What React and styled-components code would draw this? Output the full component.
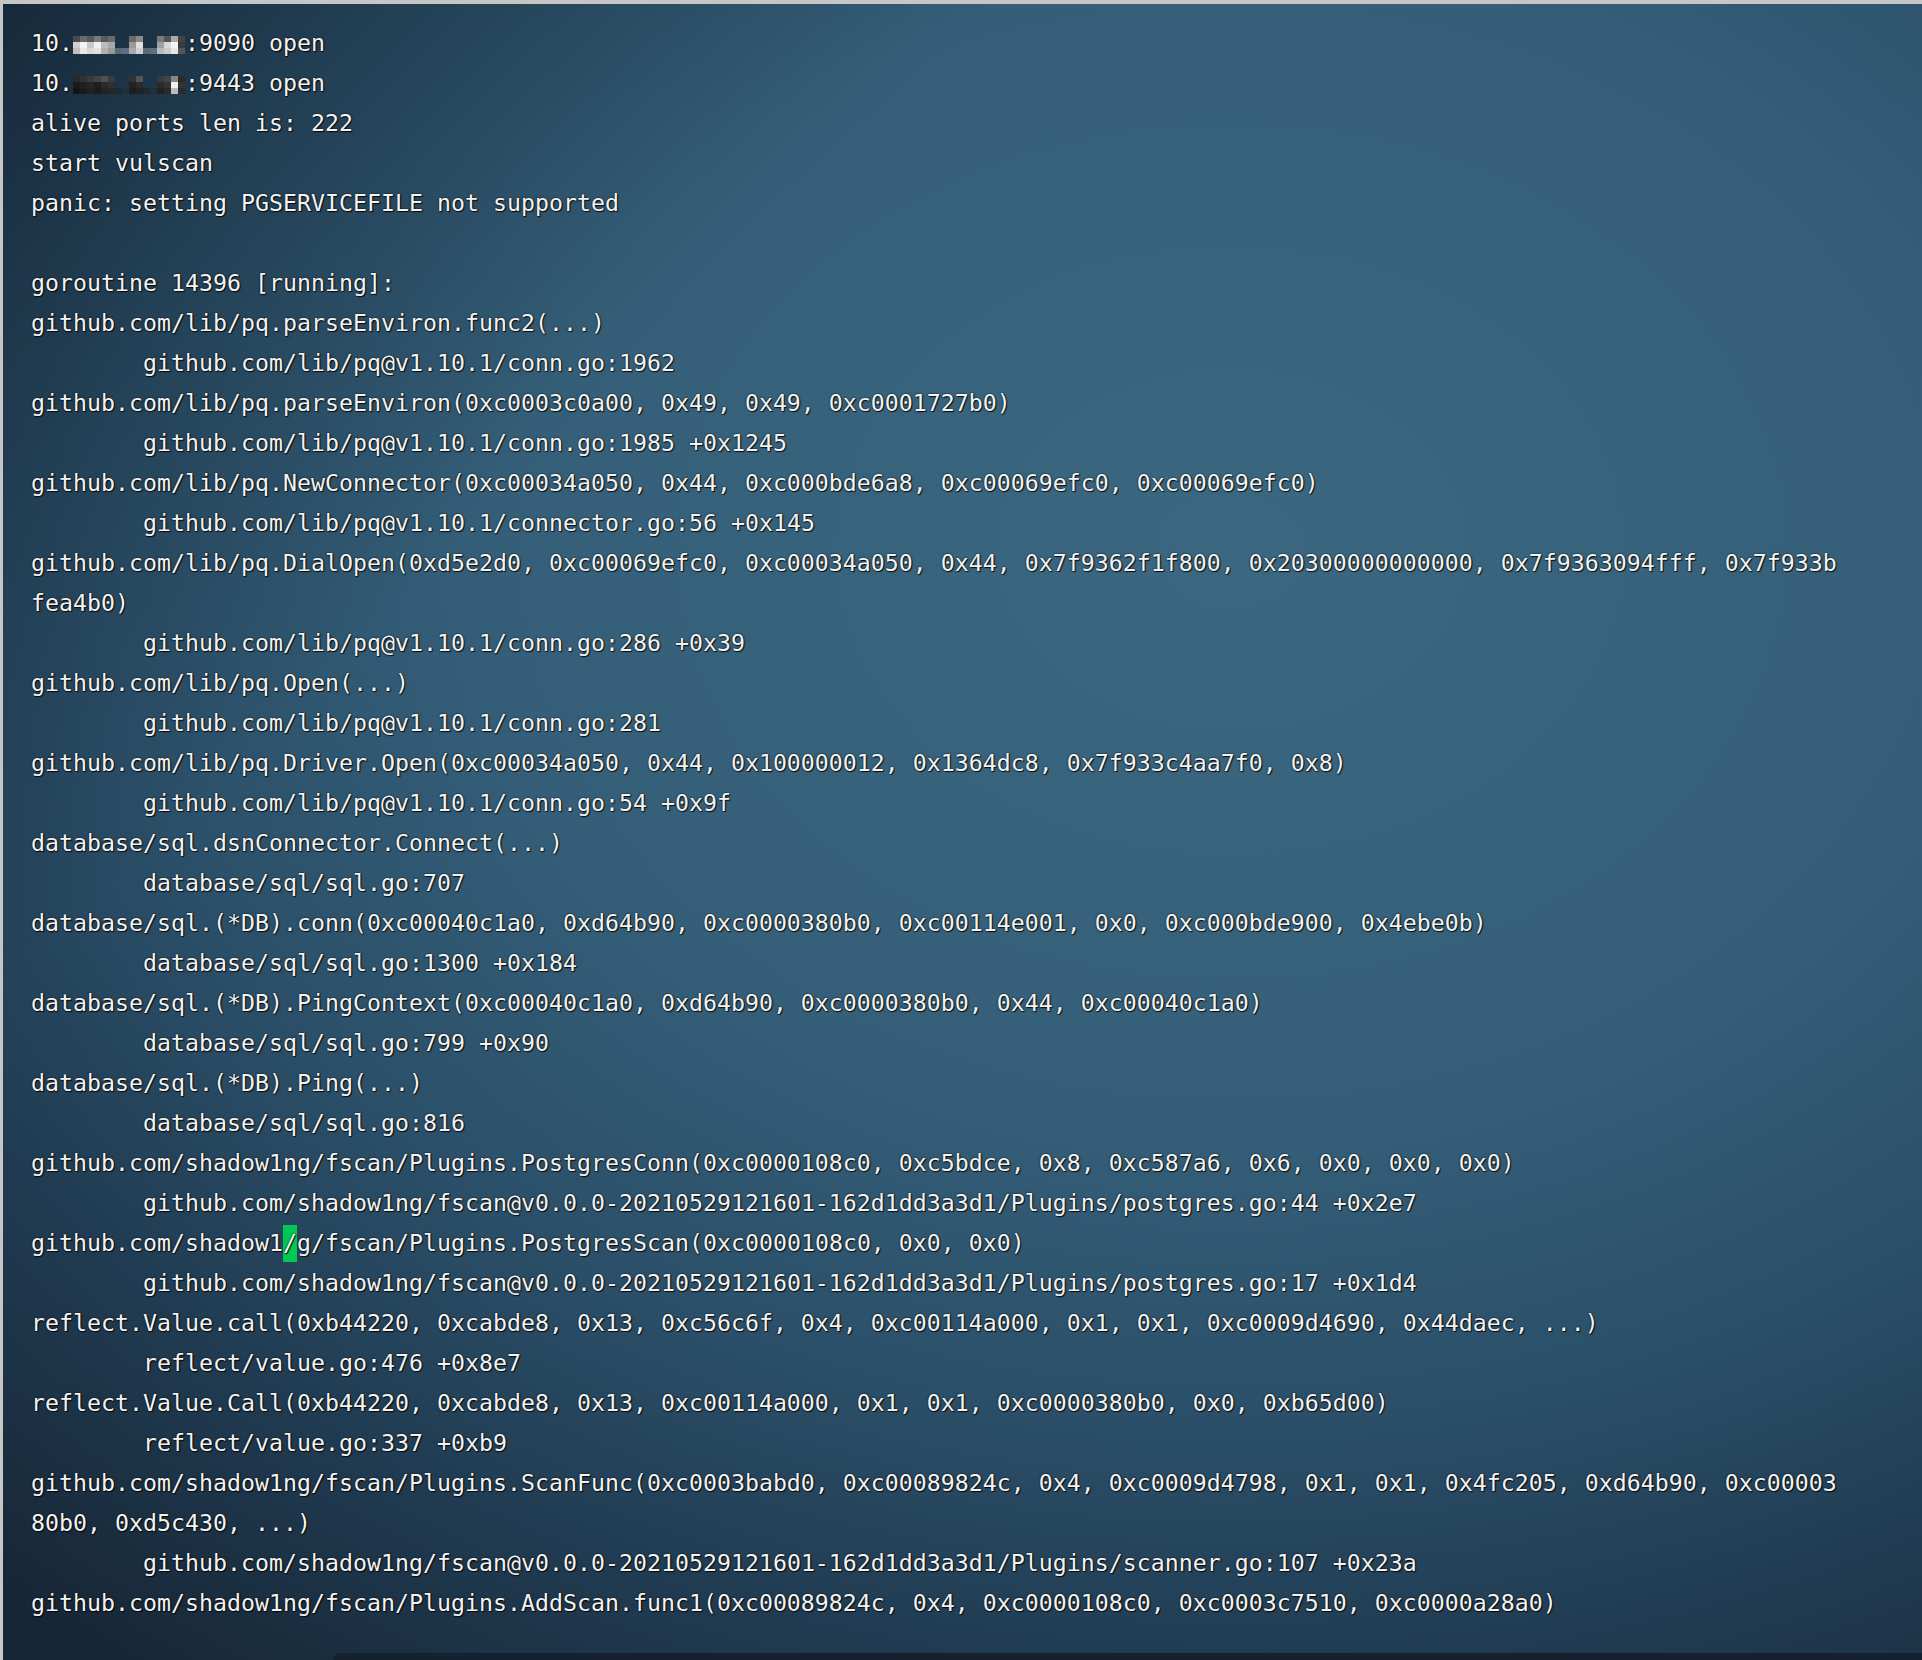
import styled, { createGlobalStyle } from "styled-components";

const GlobalStyle = createGlobalStyle`
    html, body {
        margin: 0;
        padding: 0;
        background: #c6c6c6;
    }
`;

const T = "\t";

// pixelated (blurred) ip bytes, 16 x 3 cells of 7px
const MOSAIC = {
    light: [
        ["#4a4a4a","#6a6a6a","#5a5a5a","#7a7a7a","#5a5a5a","#6a6a6a",null,null,"#6a6a6a","#8a8a8a",null,null,"#7a7a7a","#555","#aaa","#444"],
        ["#d0d0d0","#f4f4f4","#c8c8c8","#f0f0f0","#bdbdbd","#a8a8a8",null,null,"#9a9a9a","#e0e0e0",null,null,"#a0a0a0","#d8d8d8","#f4f4f4","#3a3a3a"],
        ["#c0c0c0","#e8e8e8","#d8d8d8","#e0e0e0","#b0b0b0","#999","#5a6a78","#607080","#aaa","#d0d0d0","#5a6a78","#607080","#bbb","#ccc","#e6e6e6","#555"],
    ],
    dark: [
        ["#2a2a2a","#333","#3a3a3a","#444","#505050","#3a3a3a",null,null,"#333","#555",null,null,"#3a3a3a","#444","#888","#2a2a2a"],
        ["#1a1a1a","#202020","#252525","#1e1e1e","#2a2a2a","#303030",null,null,"#222","#2a2a2a",null,null,"#2a2a2a","#333","#f0f0f0","#333"],
        ["#151515","#1a1a1a","#202020","#1c1c1c","#222","#262626","#1e2830","#22303a","#1e1e1e","#222","#1e2830","#22303a","#222","#2a2a2a","#bbb","#2a2a2a"],
    ],
};

const lines = [
    { mosaic: "light", after: ":9090 open" },
    { mosaic: "dark", after: ":9443 open" },
    "alive ports len is: 222",
    "start vulscan",
    "panic: setting PGSERVICEFILE not supported",
    "",
    "goroutine 14396 [running]:",
    "github.com/lib/pq.parseEnviron.func2(...)",
    T + "github.com/lib/pq@v1.10.1/conn.go:1962",
    "github.com/lib/pq.parseEnviron(0xc0003c0a00, 0x49, 0x49, 0xc0001727b0)",
    T + "github.com/lib/pq@v1.10.1/conn.go:1985 +0x1245",
    "github.com/lib/pq.NewConnector(0xc00034a050, 0x44, 0xc000bde6a8, 0xc00069efc0, 0xc00069efc0)",
    T + "github.com/lib/pq@v1.10.1/connector.go:56 +0x145",
    "github.com/lib/pq.DialOpen(0xd5e2d0, 0xc00069efc0, 0xc00034a050, 0x44, 0x7f9362f1f800, 0x20300000000000, 0x7f9363094fff, 0x7f933b",
    "fea4b0)",
    T + "github.com/lib/pq@v1.10.1/conn.go:286 +0x39",
    "github.com/lib/pq.Open(...)",
    T + "github.com/lib/pq@v1.10.1/conn.go:281",
    "github.com/lib/pq.Driver.Open(0xc00034a050, 0x44, 0x100000012, 0x1364dc8, 0x7f933c4aa7f0, 0x8)",
    T + "github.com/lib/pq@v1.10.1/conn.go:54 +0x9f",
    "database/sql.dsnConnector.Connect(...)",
    T + "database/sql/sql.go:707",
    "database/sql.(*DB).conn(0xc00040c1a0, 0xd64b90, 0xc0000380b0, 0xc00114e001, 0x0, 0xc000bde900, 0x4ebe0b)",
    T + "database/sql/sql.go:1300 +0x184",
    "database/sql.(*DB).PingContext(0xc00040c1a0, 0xd64b90, 0xc0000380b0, 0x44, 0xc00040c1a0)",
    T + "database/sql/sql.go:799 +0x90",
    "database/sql.(*DB).Ping(...)",
    T + "database/sql/sql.go:816",
    "github.com/shadow1ng/fscan/Plugins.PostgresConn(0xc0000108c0, 0xc5bdce, 0x8, 0xc587a6, 0x6, 0x0, 0x0, 0x0)",
    T + "github.com/shadow1ng/fscan@v0.0.0-20210529121601-162d1dd3a3d1/Plugins/postgres.go:44 +0x2e7",
    { before: "github.com/shadow1", cursor: "/", after: "g/fscan/Plugins.PostgresScan(0xc0000108c0, 0x0, 0x0)" },
    T + "github.com/shadow1ng/fscan@v0.0.0-20210529121601-162d1dd3a3d1/Plugins/postgres.go:17 +0x1d4",
    "reflect.Value.call(0xb44220, 0xcabde8, 0x13, 0xc56c6f, 0x4, 0xc00114a000, 0x1, 0x1, 0xc0009d4690, 0x44daec, ...)",
    T + "reflect/value.go:476 +0x8e7",
    "reflect.Value.Call(0xb44220, 0xcabde8, 0x13, 0xc00114a000, 0x1, 0x1, 0xc0000380b0, 0x0, 0xb65d00)",
    T + "reflect/value.go:337 +0xb9",
    "github.com/shadow1ng/fscan/Plugins.ScanFunc(0xc0003babd0, 0xc00089824c, 0x4, 0xc0009d4798, 0x1, 0x1, 0x4fc205, 0xd64b90, 0xc00003",
    "80b0, 0xd5c430, ...)",
    T + "github.com/shadow1ng/fscan@v0.0.0-20210529121601-162d1dd3a3d1/Plugins/scanner.go:107 +0x23a",
    "github.com/shadow1ng/fscan/Plugins.AddScan.func1(0xc00089824c, 0x4, 0xc0000108c0, 0xc0003c7510, 0xc0000a28a0)",
];

function Mosaic({ tone }){
    const rows = MOSAIC[tone];
    return(
        <MosaicSvg width="112" height="40" viewBox="0 0 112 40">
            {rows.map((row, r) => row.map((c, i) => c && (
                <rect key={`${r}-${i}`} x={i * 7} y={13 + r * 6} width="7" height="6" fill={c} />
            )))}
        </MosaicSvg>
    );
}

export default function App(){
    return(
        <>
            <GlobalStyle />
            <Window>
                <Output>
                    {lines.map((line, i) => {
                        if(typeof line === "string"){
                            return <Line key={i}>{line || " "}</Line>;
                        }
                        if(line.mosaic){
                            return <Line key={i}>10.<Mosaic tone={line.mosaic} />{line.after}</Line>;
                        }
                        return <Line key={i}>{line.before}<Cursor>{line.cursor}</Cursor>{line.after}</Line>;
                    })}
                </Output>
                <Dock />
            </Window>
        </>
    );
}

const Window = styled.div`
    height: 1660px;
    box-sizing: border-box;
    border-top: 4px solid #c6c6c6;
    border-left: 3px solid #c6c6c6;
    display: flex;
    flex-direction: column;
    background:
        linear-gradient(135deg, rgba(10, 18, 28, 0.45) 0%, rgba(10, 18, 28, 0) 28%),
        radial-gradient(ellipse 95% 85% at 64% 33%, #3b6781 0%, #355f79 40%, #2b4f68 62%, #203b51 80%, #172636 100%);
`;

const Output = styled.div`
    padding: 19px 0 0 28px;
    font-family: "DejaVu Sans Mono", "Liberation Mono", monospace;
    font-size: 23.25px;
    line-height: 40px;
    color: #f3f3f3;
    text-shadow: 0 0 2px rgba(0, 0, 0, 0.9), 1px 1px 1px rgba(0, 0, 0, 0.8);
`;

const Line = styled.div`
    height: 40px;
    white-space: pre;
    tab-size: 8;
`;

const MosaicSvg = styled.svg`
    display: inline-block;
    vertical-align: top;
`;

const Cursor = styled.span`
    display: inline-block;
    vertical-align: top;
    width: 14px;
    height: 40px;
    background: linear-gradient(transparent 2px, #00c853 2px, #00c853 39px, transparent 39px);
`;

const Dock = styled.div`
    margin-top: auto;
    margin-left: 330px;
    height: 7px;
    border-top-left-radius: 8px;
    background: #15212e;
`;
